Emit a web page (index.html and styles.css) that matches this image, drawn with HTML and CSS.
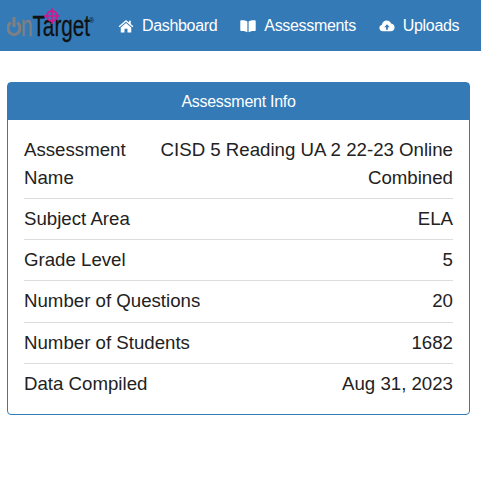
FILE: index.html
```html
<!DOCTYPE html>
<html lang="en">
<head>
    <meta charset="UTF-8">
    <meta name="viewport" content="width=device-width, initial-scale=1.0">
    <title>Assessment Info</title>
    <link rel="stylesheet" href="styles.css">
</head>
<body>
    <div class="header">
        <a href="#" class="logo">
            <svg class="logo-power" viewBox="0 0 14 21" width="14" height="21">
                <path d="M3.800 6.500a6 6.600 0 1 0 6.400 0" fill="none" stroke="#808080" stroke-width="3"/>
                <path d="M7 1v10" fill="none" stroke="#808080" stroke-width="3"/>
            </svg>
            <span class="logo-text"><span class="logo-on">n</span>Target</span>
            <span class="logo-reg">®</span>
            <svg class="logo-mark" viewBox="0 0 16 16" width="16" height="16">
                <circle cx="8" cy="8" r="5" fill="none" stroke="#d6168c" stroke-width="2"/>
                <path d="M8 0v16M0 8h16" stroke="#d6168c" stroke-width="1.500"/>
            </svg>
        </a>
        <div class="nav">
            <a href="#">
                <svg class="nav-icon" viewBox="0 0 18 16" width="16" height="14">
                    <path d="M9 1L0.600 8.200l1 1.200L9 3.200l7.400 6.200 1-1.200L14.500 5.800V2h-2v2.100z" fill="#fff"/>
                    <path d="M9 4.600L3 9.600V15.400h4.300v-4.200h3.400v4.200H15V9.600z" fill="#fff"/>
                </svg>
                Dashboard
            </a>
            <a href="#">
                <svg class="nav-icon" viewBox="0 0 18 16" width="16" height="14">
                    <path d="M8.300 2.800C6.600 1.700 3.800 1.300 1 1.500c-.5 0-.8.400-.8.800v10.500c0 .5.400.8.900.8 2.600-.1 5.200.3 7.200 1.400z" fill="#fff"/>
                    <path d="M9.700 2.800C11.400 1.700 14.200 1.300 17 1.500c.5 0 .8.400.8.800v10.500c0 .5-.4.8-.9.8-2.600-.1-5.200.3-7.200 1.400z" fill="#fff"/>
                </svg>
                Assessments
            </a>
            <a href="#">
                <svg class="nav-icon" viewBox="0 0 18 16" width="16" height="14">
                    <path d="M4.300 14C2 14 .3 12.400.3 10.200c0-1.800 1.200-3.300 2.900-3.700C3.500 3.700 5.800 1.700 8.600 1.700c2.300 0 4.300 1.300 5.100 3.400 2.300.3 4 2.200 4 4.500 0 2.500-2 4.400-4.500 4.400z" fill="#fff"/>
                    <path d="M9 6L5.900 9.300h2.100v3h2v-3h2.100z" fill="#337ab7"/>
                </svg>
                Uploads
            </a>
        </div>
    </div>

    <div class="panel">
        <div class="panel-heading">Assessment Info</div>
        <div class="panel-body">
            <div class="info-row">
                <div>Assessment Name</div>
                <div class="info-value">CISD 5 Reading UA 2 22-23 Online Combined</div>
            </div>
            <div class="info-row">
                <div>Subject Area</div>
                <div class="info-value">ELA</div>
            </div>
            <div class="info-row">
                <div>Grade Level</div>
                <div class="info-value">5</div>
            </div>
            <div class="info-row">
                <div>Number of Questions</div>
                <div class="info-value">20</div>
            </div>
            <div class="info-row">
                <div>Number of Students</div>
                <div class="info-value">1682</div>
            </div>
            <div class="info-row">
                <div>Data Compiled</div>
                <div class="info-value">Aug 31, 2023</div>
            </div>
        </div>
    </div>
</body>
</html>
```

FILE: styles.css
```css
body {
    font-family: "Liberation Sans", Arial, sans-serif;
    background-color: #fff;
    color: #222;
    margin: 0;
    padding: 0;
}
.header {
    background-color: #337ab7;
    height: 51px;
    display: flex;
    align-items: center;
    padding-left: 7px;
}
.logo {
    position: relative;
    display: flex;
    width: 88px;
    height: 32px;
    margin-top: -1px;
    text-decoration: none;
}
.logo-power {
    flex: none;
    margin-top: 7px;
}
.logo-text {
    display: inline-block;
    width: 71px;
    flex: none;
    color: #111;
    font-size: 30px;
    line-height: 34px;
    white-space: nowrap;
    transform: scaleX(0.69);
    transform-origin: left center;
    -webkit-text-stroke: 0.3px #111;
}
.logo-on {
    color: #808080;
    -webkit-text-stroke: 0.3px #808080;
}
.logo-reg {
    color: #111;
    font-size: 7px;
    line-height: 7px;
    margin-top: 8px;
    margin-left: -3px;
}
.logo-mark {
    position: absolute;
    left: 37px;
    top: -1px;
}
.nav {
    display: flex;
    gap: 23px;
    margin-left: 23px;
}
.nav a {
    display: flex;
    align-items: center;
    gap: 8px;
    color: #fff;
    text-decoration: none;
    font-size: 16px;
    letter-spacing: -0.33px;
    line-height: 22px;
}
.nav a:hover {
    text-decoration: underline;
}
.nav-icon {
    flex: none;
}
.panel {
    margin: 31px 11px 0 7px;
    border: 1px solid #337ab7;
    border-radius: 4px;
}
.panel-heading {
    background-color: #337ab7;
    color: #fff;
    font-size: 16px;
    letter-spacing: -0.27px;
    line-height: 21px;
    padding: 8px 15px;
    text-align: center;
}
.panel-body {
    padding: 9.5px 16px 10px;
    font-size: 18.67px;
    line-height: 28.2px;
}
.info-row {
    display: flex;
    justify-content: space-between;
    padding: 6px 0;
}
.info-row + .info-row {
    border-top: 1px solid #ddd;
}
.info-value {
    text-align: right;
}
```
